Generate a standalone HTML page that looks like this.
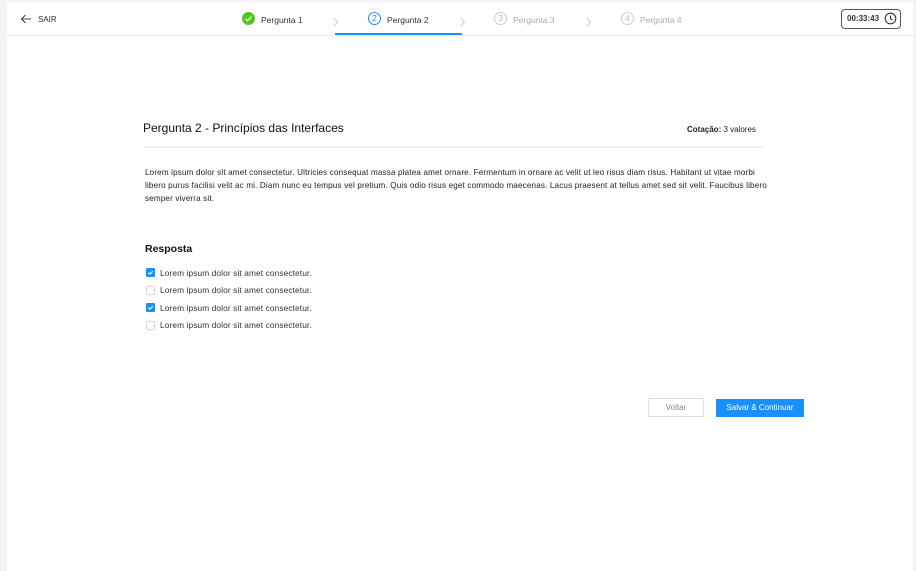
<!DOCTYPE html>
<html><head><meta charset="utf-8"><style>
*{margin:0;padding:0;box-sizing:border-box}
body{width:916px;height:571px;background:#f3f4f6;font-family:"Liberation Sans",Arial,sans-serif;position:relative;overflow:hidden;color:#222}
.page{position:absolute;left:7px;top:3px;width:906px;height:568px;background:#fff}
.hdr{position:absolute;left:0;top:0;width:906px;height:33px;border-bottom:1px solid #ececec}
.abs{position:absolute}
.t{font-size:8.5px;white-space:nowrap}
.circ{position:absolute;width:13px;height:13px;border-radius:50%;font-size:8.5px;text-align:center;line-height:11px}
.chev{position:absolute;width:6px;height:6px;border-right:1px solid #ccc;border-top:1px solid #ccc;transform:rotate(45deg)}
.cb{position:absolute;left:139px;width:9px;height:9px;border:1px solid #d6d6d6;border-radius:1px;background:#fff}
.cb.on{background:#1890ff;border-color:#1890ff}
.opt{position:absolute;left:153px;font-size:8.3px;letter-spacing:0.12px;color:#333;white-space:nowrap}
</style></head><body>
<div class="page">
 <div class="hdr">
  <svg class="abs" style="left:13px;top:11px" width="12" height="10" viewBox="0 0 12 10"><path d="M11 5H1.5M5.5 1L1.5 5l4 4" fill="none" stroke="#444" stroke-width="1.1"/></svg>
  <div class="abs t" style="left:31px;top:12px;font-size:8px;color:#333">SAIR</div>

  <div class="circ" style="left:235px;top:9px;background:#52c41a"><svg width="13" height="13" viewBox="0 0 13 13" style="position:absolute;left:0;top:0"><path d="M3.5 6.8l2 2 4-4.3" fill="none" stroke="#fff" stroke-width="1.2"/></svg></div>
  <div class="abs t" style="left:254px;top:12px;color:#333">Pergunta 1</div>
  <div class="chev" style="left:324px;top:16px"></div>

  <div class="circ" style="left:361px;top:9px;border:1px solid #1890ff;color:#1890ff">2</div>
  <div class="abs t" style="left:380px;top:12px;color:#333">Pergunta 2</div>
  <div class="abs" style="left:328px;top:30px;width:127px;height:2px;background:#1890ff"></div>
  <div class="chev" style="left:451px;top:16px"></div>

  <div class="circ" style="left:487px;top:9px;border:1px solid #ccc;color:#bbb">3</div>
  <div class="abs t" style="left:506px;top:12px;color:#aaa">Pergunta 3</div>
  <div class="chev" style="left:577px;top:16px"></div>

  <div class="circ" style="left:614px;top:9px;border:1px solid #ccc;color:#bbb">4</div>
  <div class="abs t" style="left:633px;top:12px;color:#aaa">Pergunta 4</div>

  <div class="abs" style="left:834px;top:6px;width:60px;height:20px;border:1.3px solid #555;border-radius:4px"></div>
  <div class="abs t" style="left:840px;top:11px;font-size:8px;font-weight:bold;color:#333">00:33:43</div>
  <svg class="abs" style="left:877px;top:9px" width="13" height="13" viewBox="0 0 13 13"><circle cx="6.5" cy="6.5" r="5.3" fill="none" stroke="#333" stroke-width="1.1"/><path d="M6.5 3.5v3.2l2 1.5" fill="none" stroke="#333" stroke-width="1.1"/></svg>
 </div>

 <div class="abs" style="left:136px;top:118px;font-size:12px;color:#111">Pergunta 2 - Princípios das Interfaces</div>
 <div class="abs t" style="left:680px;top:122px;font-size:8px;color:#222"><b>Cotação:</b> 3 valores</div>
 <div class="abs" style="left:136px;top:143px;width:621px;height:2px;background:#efefef"></div>
 <div class="abs" style="left:138px;top:163px;width:624px;font-size:8.1px;letter-spacing:0.16px;line-height:13px;color:#222">Lorem ipsum dolor sit amet consectetur. Ultricies consequat massa platea amet ornare. Fermentum in ornare ac velit ut leo risus diam risus. Habitant ut vitae morbi libero purus facilisi velit ac mi. Diam nunc eu tempus vel pretium. Quis odio risus eget commodo maecenas. Lacus praesent at tellus amet sed sit velit. Faucibus libero semper viverra sit.</div>

 <div class="abs" style="left:138px;top:240px;font-size:10.5px;font-weight:bold;color:#111">Resposta</div>
 <div class="cb on" style="top:265px"><svg width="9" height="9" viewBox="0 0 9 9" style="position:absolute;left:-1px;top:-1px"><path d="M2.3 4.6l1.6 1.5 3-3" fill="none" stroke="#fff" stroke-width="1.1"/></svg></div>
 <div class="opt" style="top:265px">Lorem ipsum dolor sit amet consectetur.</div>
 <div class="cb" style="top:283px"></div>
 <div class="opt" style="top:282px">Lorem ipsum dolor sit amet consectetur.</div>
 <div class="cb on" style="top:300px"><svg width="9" height="9" viewBox="0 0 9 9" style="position:absolute;left:-1px;top:-1px"><path d="M2.3 4.6l1.6 1.5 3-3" fill="none" stroke="#fff" stroke-width="1.1"/></svg></div>
 <div class="opt" style="top:300px">Lorem ipsum dolor sit amet consectetur.</div>
 <div class="cb" style="top:318px"></div>
 <div class="opt" style="top:317px">Lorem ipsum dolor sit amet consectetur.</div>

 <div class="abs" style="left:641px;top:395px;width:56px;height:19px;border:1px solid #ddd;font-size:8px;color:#888;text-align:center;line-height:17px">Voltar</div>
 <div class="abs" style="left:709px;top:396px;width:88px;height:18px;background:#1890ff;font-size:8px;color:#fff;text-align:center;line-height:18px">Salvar &amp; Continuar</div>
</div>
</body></html>
